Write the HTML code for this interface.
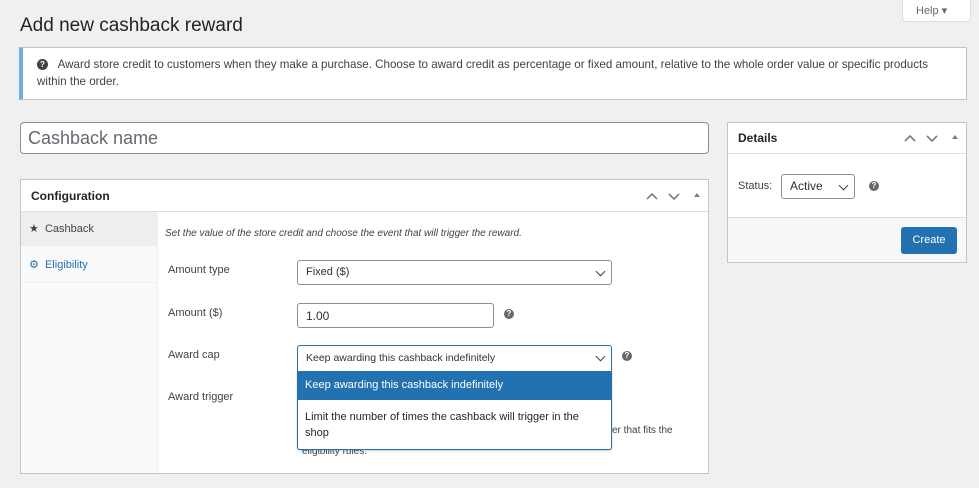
<!DOCTYPE html>
<html><head><style>
*{box-sizing:border-box;margin:0;padding:0}
body{width:979px;height:488px;background:#f0f0f1;font-family:"Liberation Sans",sans-serif;color:#3c434a;position:relative;overflow:hidden;font-size:11px}
.a{position:absolute}
.help{left:902px;top:-2px;width:69px;height:24px;background:#fff;border:1px solid #dcdcde;border-radius:0 0 4px 4px;font-size:11px;color:#646970;padding:5px 0 0 13px}
h1{position:absolute;left:20px;top:15px;font-size:19px;font-weight:400;color:#1d2327}
.notice{left:19px;top:47px;width:948px;height:53px;background:#fff;border:1px solid #c3c4c7;border-left:4px solid #72aee6;font-size:11.6px;line-height:17px;padding:8px 10px 0 14px;color:#3c434a}
.q{display:inline-block;width:11px;height:11px;border-radius:50%;background:#3c434a;color:#fff;font-size:8px;font-weight:bold;text-align:center;line-height:11px;vertical-align:middle}
.q2{background:#646970;width:10px;height:10px;line-height:10px}
.name{left:20px;top:122px;width:689px;height:32px;background:#fff;border:1px solid #8c8f94;border-radius:4px;font-size:18px;color:#646970;padding:5px 0 0 7px}
.box{background:#fff;border:1px solid #c3c4c7}
.hdr{font-weight:bold;font-size:12px;color:#1d2327}
.sel{background:#fff;border:1px solid #8c8f94;border-radius:3px;font-size:11px;color:#2c3338;padding:0 8px}
.chev{position:absolute;right:7px;top:7px;width:7px;height:7px;border-right:1.5px solid #3c434a;border-bottom:1.5px solid #3c434a;transform:rotate(45deg)}
.lbl{font-size:11px;color:#3c434a}
</style></head><body>
<div class="a help">Help ▾</div>
<h1>Add new cashback reward</h1>
<div class="a notice"><span class="q">?</span>&nbsp;&nbsp;&nbsp;Award store credit to customers when they make a purchase. Choose to award credit as percentage or fixed amount, relative to the whole order value or specific products within the order.</div>
<div class="a name">Cashback name</div>

<div class="a box" style="left:20px;top:179px;width:689px;height:295px"></div>
<div class="a" style="left:21px;top:211px;width:687px;height:1px;background:#dcdcde"></div>
<div class="a hdr" style="left:31px;top:189px">Configuration</div>
<svg class="a" style="left:645px;top:190px" width="60" height="12"><path d="M2 9l5-5 5 5M24 4l5 5 5-5" stroke="#787c82" stroke-width="1.6" fill="none"/><path d="M49 7l3-4 3 4z" fill="#787c82"/></svg>
<div class="a" style="left:21px;top:212px;width:137px;height:261px;background:#fafafa;border-right:1px solid #eee"></div>
<div class="a" style="left:21px;top:212px;width:137px;height:34px;background:#eee"></div>
<div class="a" style="left:21px;top:282px;width:137px;height:1px;background:#eee"></div>
<div class="a" style="left:29px;top:222px;font-size:11px;color:#3c434a">★&nbsp;&nbsp;Cashback</div>
<div class="a" style="left:29px;top:258px;font-size:11px;color:#2271b1">⚙&nbsp;&nbsp;Eligibility</div>
<div class="a" style="left:165px;top:228px;font-size:10px;font-style:italic;color:#3c434a">Set the value of the store credit and choose the event that will trigger the reward.</div>
<div class="a lbl" style="left:168px;top:264px">Amount type</div>
<div class="a lbl" style="left:168px;top:307px">Amount ($)</div>
<div class="a lbl" style="left:168px;top:349px">Award cap</div>
<div class="a lbl" style="left:168px;top:391px">Award trigger</div>
<div class="a sel" style="left:297px;top:260px;width:315px;height:25px;line-height:23px">Fixed ($)<span class="chev"></span></div>
<div class="a sel" style="left:297px;top:303px;width:197px;height:25px;line-height:24px;font-size:12px">1.00</div>
<span class="a q q2" style="left:504px;top:309px">?</span>
<div class="a" style="left:612px;top:425px;font-size:10px;color:#3c434a">er that fits the</div>
<div class="a" style="left:302px;top:446px;font-size:10px;color:#3c434a">eligibility rules.</div>
<div class="a sel" style="left:297px;top:345px;width:315px;height:26px;line-height:24px;border-color:#2271b1;border-bottom:none;border-radius:3px 3px 0 0;font-size:10.5px">Keep awarding this cashback indefinitely<span class="chev"></span></div>
<span class="a q q2" style="left:622px;top:351px">?</span>
<div class="a" style="left:297px;top:370px;width:315px;height:80px;background:#fff;border:1.5px solid #2271b1;border-top:none;border-radius:0 0 3px 3px;box-shadow:0 1px 2px rgba(0,0,0,.2)"></div>
<div class="a" style="left:297px;top:371px;width:315px;height:29px;background:#2271b1;color:#fff;font-size:11px;padding:8px 0 0 8px">Keep awarding this cashback indefinitely</div>
<div class="a" style="left:305px;top:409px;width:300px;font-size:11px;line-height:16px;color:#1d2327">Limit the number of times the cashback will trigger in the shop</div>

<div class="a box" style="left:727px;top:122px;width:240px;height:141px"></div>
<div class="a" style="left:728px;top:153px;width:238px;height:1px;background:#dcdcde"></div>
<div class="a hdr" style="left:738px;top:131px">Details</div>
<svg class="a" style="left:903px;top:132px" width="60" height="12"><path d="M2 9l5-5 5 5M24 4l5 5 5-5" stroke="#787c82" stroke-width="1.6" fill="none"/><path d="M49 7l3-4 3 4z" fill="#787c82"/></svg>
<div class="a lbl" style="left:738px;top:180px">Status:</div>
<div class="a sel" style="left:781px;top:174px;width:74px;height:25px;line-height:23px;font-size:12px">Active<span class="chev"></span></div>
<span class="a q q2" style="left:869px;top:181px">?</span>
<div class="a" style="left:728px;top:217px;width:238px;height:45px;background:#f6f7f7;border-top:1px solid #dcdcde"></div>
<div class="a" style="left:901px;top:227px;width:56px;height:27px;background:#2271b1;border-radius:3px;color:#fff;font-size:11px;text-align:center;line-height:27px">Create</div>
</body></html>
